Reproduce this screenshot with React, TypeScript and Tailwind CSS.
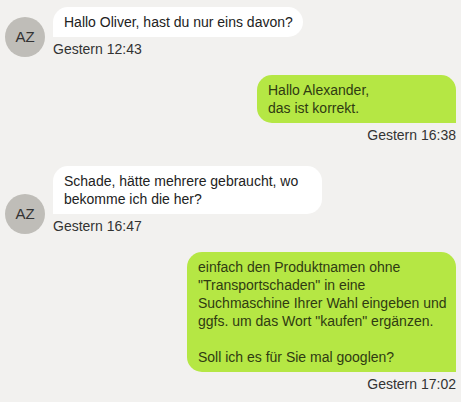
import React from "react";

type Msg = {
  from: "them" | "me";
  lines: string[];
  time: string;
  width?: string;
};

const messages: Msg[] = [
  { from: "them", lines: ["Hallo Oliver, hast du nur eins davon?"], time: "Gestern 12:43" },
  { from: "me", lines: ["Hallo Alexander,", "das ist korrekt."], time: "Gestern 16:38", width: "w-[199px]" },
  {
    from: "them",
    lines: ["Schade, hätte mehrere gebraucht, wo", "bekomme ich die her?"],
    time: "Gestern 16:47",
    width: "w-[269px]",
  },
  {
    from: "me",
    lines: [
      "einfach den Produktnamen ohne",
      "\"Transportschaden\" in eine",
      "Suchmaschine Ihrer Wahl eingeben und",
      "ggfs. um das Wort \"kaufen\" ergänzen.",
      "",
      "Soll ich es für Sie mal googlen?",
    ],
    time: "Gestern 17:02",
    width: "w-[269px]",
  },
];

function Lines({ lines }: { lines: string[] }) {
  return (
    <>
      {lines.map((l, i) => (
        <div key={i} className="h-[18px] whitespace-nowrap">
          {l}
        </div>
      ))}
    </>
  );
}

function Incoming({ msg }: { msg: Msg }) {
  return (
    <div className="flex items-end gap-2 pl-[5px]">
      <div className="mb-[1px] flex h-10 w-10 shrink-0 items-center justify-center rounded-full bg-[#bfbdb8] text-[15px] text-[#333]">
        AZ
      </div>
      <div className="flex flex-col items-start">
        <div className={`rounded-[15px] rounded-bl-none bg-white py-[6px] pl-[11px] pr-[10px] text-[#222] ${msg.width ?? ""}`}>
          <Lines lines={msg.lines} />
        </div>
        <div className="mt-[3px] h-[18px] text-[#333]">{msg.time}</div>
      </div>
    </div>
  );
}

function Outgoing({ msg }: { msg: Msg }) {
  return (
    <div className="flex flex-col items-end pr-[5px]">
      <div className={`rounded-[15px] rounded-br-none bg-[#b5e744] px-[11px] py-[6px] text-[#2f3b12] ${msg.width ?? ""}`}>
        <Lines lines={msg.lines} />
      </div>
      <div className="mt-[3px] h-[18px] text-[#333]">{msg.time}</div>
    </div>
  );
}

export default function App() {
  return (
    <div
      className="h-[402px] w-[461px] overflow-hidden bg-[#f2f1ef] pt-[7px] text-[14px] leading-[18px]"
      style={{ fontFamily: '"Liberation Sans", Arial, sans-serif' }}
    >
      <Incoming msg={messages[0]} />
      <div className="mt-[17px]">
        <Outgoing msg={messages[1]} />
      </div>
      <div className="mt-[22px]">
        <Incoming msg={messages[2]} />
      </div>
      <div className="mt-[17px]">
        <Outgoing msg={messages[3]} />
      </div>
    </div>
  );
}
